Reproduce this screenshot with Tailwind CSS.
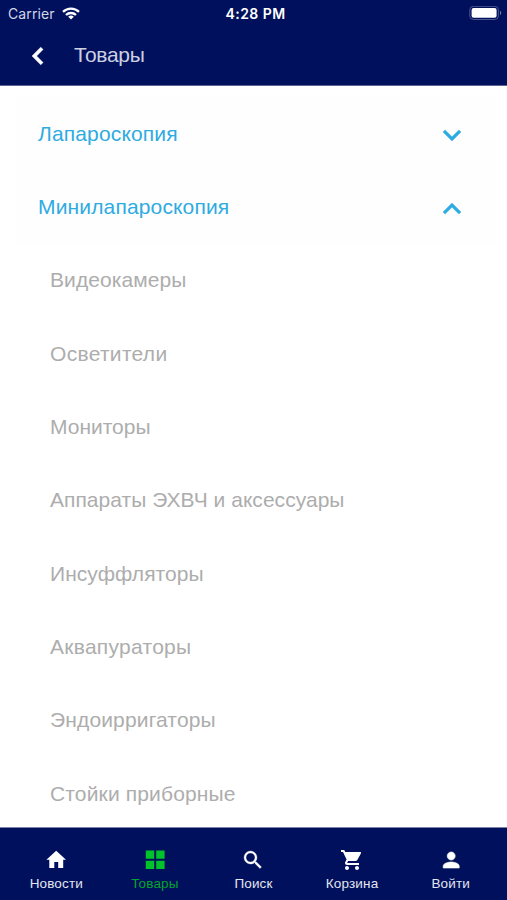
<!DOCTYPE html>
<html lang="ru">

<head>
  <meta charset="UTF-8">
  <meta name="viewport" content="width=device-width, initial-scale=1.0">
  <title>Товары</title>
  <script src="https://cdn.jsdelivr.net/npm/@tailwindcss/browser@4"></script>
</head>

<body class="bg-white font-['Liberation_Sans',sans-serif] antialiased">
  <div id="app" class="flex flex-col h-[900px] w-[507px] overflow-hidden">
    <!-- Шапка -->
    <header class="shrink-0 h-[86px] bg-[#00105c] text-white border-b border-[#5a6394]">
      <!-- Строка состояния -->
      <div class="grid grid-cols-3 items-center h-[27px] pl-2 pr-[5px] font-[Inter,sans-serif]">
        <div class="flex items-center gap-[7px] text-[#d3d6e6]">
          <span class="text-[14px] tracking-[0.1px]">Carrier</span>
          <svg class="w-[18px] h-[13px]" viewBox="0 0 18 13" fill="none" stroke="#fff" stroke-width="2.3">
            <path d="M1 4.8a11.5 11.5 0 0 1 16 0" />
            <path d="M4 8a7.2 7.2 0 0 1 10 0" />
            <path d="M9 12.6L6.2 9.8a4 4 0 0 1 5.6 0z" fill="#fff" stroke="none" />
          </svg>
        </div>
        <span class="pl-px text-center text-[14px] font-semibold tracking-[0.45px]">4:28 PM</span>
        <svg class="justify-self-end w-[33px] h-[15px]" viewBox="0 0 33 15">
          <rect x="0.8" y="0.3" width="28.6" height="13.2" rx="3.6" fill="none" stroke="#4d578c" />
          <rect x="2.6" y="2.1" width="25" height="9.6" rx="2" fill="#fff" />
          <path d="M31 4.7c1.6.6 1.6 3.8 0 4.4z" fill="#7079a6" />
        </svg>
      </div>
      <!-- Навигация -->
      <div class="flex items-center h-[56px] pl-5">
        <svg class="w-9 h-9 mt-px" viewBox="0 0 24 24" fill="#fff">
          <path d="M15.4 7.6L13.8 6.1 8 12l5.8 5.9 1.6-1.5L11.1 12z" stroke="#fff" stroke-width="0.3" />
        </svg>
        <h1 class="ml-[18px] text-[21px] leading-6 tracking-[-0.3px] text-[#ccd0e2]">Товары</h1>
      </div>
    </header>

    <!-- Каталог -->
    <main class="flex-1 min-h-0 overflow-hidden pl-4 pr-[10px] pt-[11px]">
      <div class="bg-[#fefefe] text-[#2eabe1] text-[21px] tracking-[0.15px]">
        <div class="flex items-center justify-between h-[73.3px] pl-[22px] pr-[27px]">
          <span>Лапароскопия</span>
          <svg class="w-9 h-9 mt-0.5" viewBox="0 0 24 24" fill="currentColor" stroke="currentColor" stroke-width="0.3">
            <path d="M16.59 8.59L12 13.17 7.41 8.59 6 10l6 6 6-6z" />
          </svg>
        </div>
        <div class="flex items-center justify-between h-[73.3px] pl-[22px] pr-[27px]">
          <span>Минилапароскопия</span>
          <svg class="w-9 h-9 mt-1" viewBox="0 0 24 24" fill="currentColor" stroke="currentColor" stroke-width="0.3">
            <path d="M12 8l-6 6 1.41 1.41L12 10.83l4.59 4.58L18 14z" />
          </svg>
        </div>
      </div>
      <ul class="pl-[34px] text-[21px] text-[#adadad]">
        <li class="flex items-center h-[73.3px]"><span class="tracking-[0.07px]">Видеокамеры</span></li>
        <li class="flex items-center h-[73.3px]"><span class="tracking-[0.3px]">Осветители</span></li>
        <li class="flex items-center h-[73.3px]"><span>Мониторы</span></li>
        <li class="flex items-center h-[73.3px]"><span class="tracking-[0.03px]">Аппараты ЭХВЧ и аксессуары</span></li>
        <li class="flex items-center h-[73.3px]"><span class="tracking-[0.05px]">Инсуффляторы</span></li>
        <li class="flex items-center h-[73.3px]"><span class="tracking-[0.27px]">Аквапураторы</span></li>
        <li class="flex items-center h-[73.3px]"><span class="tracking-[0.15px]">Эндоирригаторы</span></li>
        <li class="flex items-center h-[73.3px]"><span class="tracking-[0.15px]">Стойки приборные</span></li>
      </ul>
    </main>

    <!-- Нижнее меню -->
    <nav class="shrink-0 grid grid-cols-5 h-[73px] px-[7px] pt-5 bg-[#00105c] border-t border-[#7a82aa] text-[#e3e5ef] text-[13.5px] leading-4 tracking-[0.15px]">
      <a class="flex flex-col items-center gap-1">
        <svg class="w-6 h-6" viewBox="0 0 24 24" fill="#fff">
          <path d="M10.3 20v-6h3.9v6h5v-8.2h2.8L12.2 2.8 2.4 11.8h2.9V20z" />
        </svg>
        <span>Новости</span>
      </a>
      <a class="flex flex-col items-center gap-1 text-[#00a52e]">
        <svg class="w-6 h-6" viewBox="0 0 24 24" fill="#00c32b">
          <path d="M2.8 2.5h8.4v8.2H2.8zM13.2 2.5h8.4v8.2h-8.4zM2.8 12.7h8.4v8.4H2.8zM13.2 12.7h8.4v8.4h-8.4z" />
        </svg>
        <span>Товары</span>
      </a>
      <a class="flex flex-col items-center gap-1">
        <svg class="w-6 h-6" viewBox="0 0 24 24" fill="#fff" stroke="#fff" stroke-width="0.3">
          <path d="M15.5 14h-.79l-.28-.27A6.471 6.471 0 0 0 16 9.5 6.5 6.5 0 1 0 9.5 16c1.61 0 3.09-.59 4.23-1.57l.27.28v.79l5 4.99L20.49 19l-4.99-5zm-6 0C7.01 14 5 11.99 5 9.5S7.01 5 9.5 5 14 7.01 14 9.5 11.99 14 9.5 14z" />
        </svg>
        <span>Поиск</span>
      </a>
      <a class="flex flex-col items-center gap-1">
        <svg class="w-6 h-6" viewBox="0 0 24 24" fill="#fff">
          <path d="M7 18c-1.1 0-1.99.9-1.99 2S5.9 22 7 22s2-.9 2-2-.9-2-2-2zM1 2v2h2l3.6 7.59-1.35 2.45c-.16.28-.25.61-.25.96 0 1.1.9 2 2 2h12v-2H7.42c-.14 0-.25-.11-.25-.25l.03-.12.9-1.63h7.45c.75 0 1.41-.41 1.75-1.03l3.58-6.49A1.003 1.003 0 0 0 20 4H5.21l-.94-2H1zm16 16c-1.1 0-1.99.9-1.99 2s.89 2 1.99 2 2-.9 2-2-.9-2-2-2z" />
        </svg>
        <span>Корзина</span>
      </a>
      <a class="flex flex-col items-center gap-1">
        <svg class="w-6 h-6" viewBox="0 0 24 24" fill="#fff" stroke="#fff" stroke-width="0.6">
          <path d="M12.2 12c2.21 0 4-1.79 4-4s-1.79-4-4-4-4 1.79-4 4 1.79 4 4 4zm0 2c-2.67 0-8 1.34-8 4v2h16v-2c0-2.66-5.33-4-8-4z" />
        </svg>
        <span>Войти</span>
      </a>
    </nav>
  </div>
</body>

</html>
